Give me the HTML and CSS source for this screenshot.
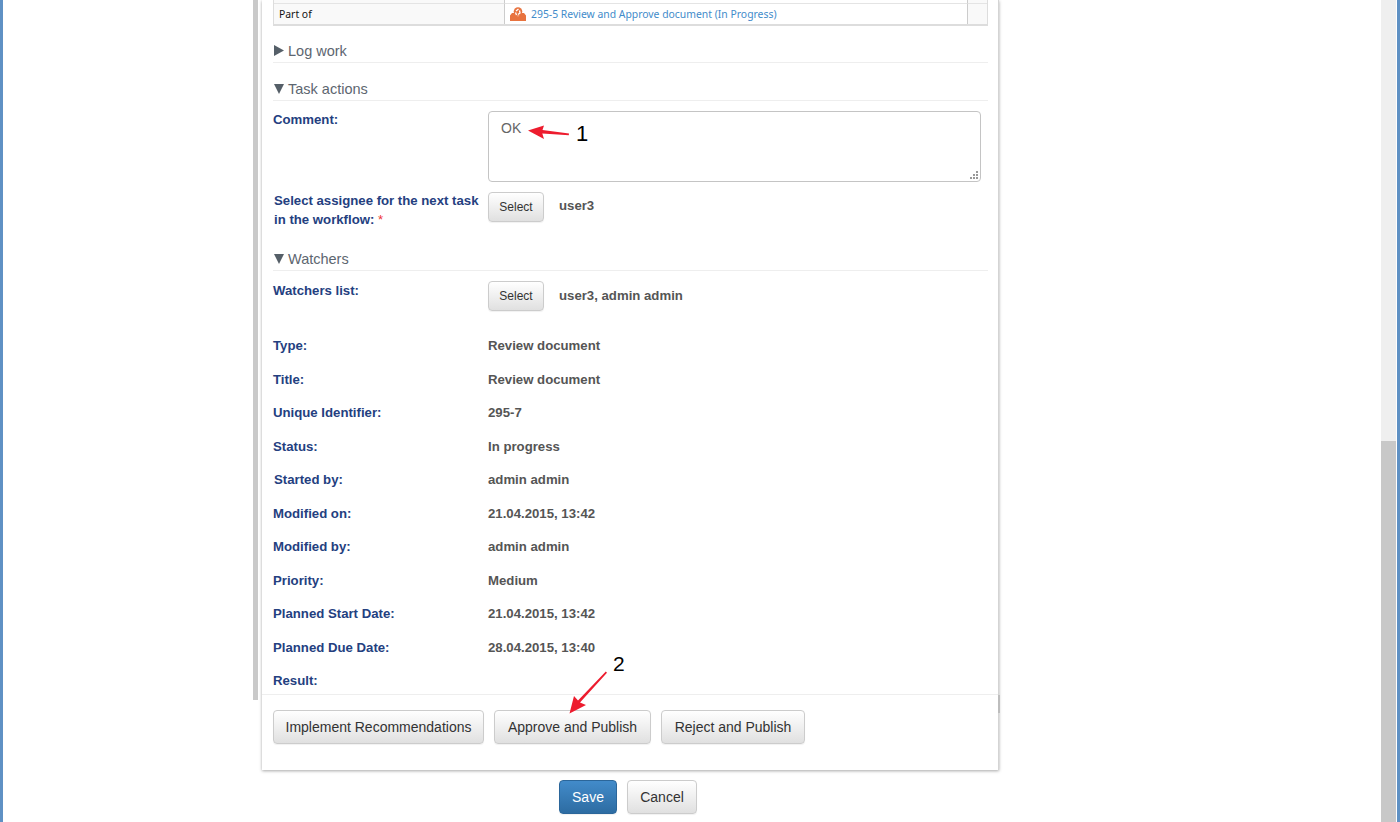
FILE: index.html
```html
<!DOCTYPE html>
<html lang="en">
<head>
<meta charset="utf-8">
<title>Review document</title>
<link rel="stylesheet" href="styles.css">
</head>
<body>
<div class="window">
  <div class="edge"></div>
  <div class="page">
    <div class="rail"></div>
    <div class="column">
      <div class="panel">
        <div class="panel-body">
          <div class="table">
            <div class="cell cell-stub"></div><div class="cell cell-mid cell-stub"></div><div class="cell cell-end cell-stub"></div>
            <div class="cell">Part of</div>
            <div class="cell cell-mid">
              <svg class="wf-icon" viewBox="0 0 16 14" aria-hidden="true"><path fill="#e8733f" d="M0 14V8.500L2 6h2.500L8 9.500 11.500 6H14l2 2.500V14z"/><circle cx="8" cy="4.500" r="4.300" fill="#e8733f"/><path fill="none" stroke="#fff" stroke-width="1.300" d="M6 4 8.500 2M9.500 3.500 10 6 8 7.500M5.500 5.500 6.500 8"/></svg>
              <a class="link" href="#">295-5 Review and Approve document (In Progress)</a>
            </div>
            <div class="cell cell-end"></div>
          </div>

          <h3 class="section section-log"><span class="tri tri-right"></span>Log work</h3>
          <h3 class="section section-actions"><span class="tri tri-down"></span>Task actions</h3>

          <div class="form-row row-comment">
            <label class="label">Comment:</label>
            <div class="textarea">OK<svg class="grip" viewBox="0 0 9 9" aria-hidden="true"><path fill="#999" d="M7 1h2v2H7zM4 4h2v2H4zM7 4h2v2H7zM1 7h2v2H1zM4 7h2v2H4zM7 7h2v2H7z"/></svg></div>
          </div>
          <div class="form-row row-assignee">
            <label class="label label-indent">Select assignee for the next task<br>in the workflow: <span class="req">*</span></label>
            <button class="btn btn-small">Select</button>
            <span class="value value-pick">user3</span>
          </div>

          <h3 class="section section-watchers"><span class="tri tri-down"></span>Watchers</h3>
          <div class="form-row row-watchers">
            <label class="label">Watchers list:</label>
            <button class="btn btn-small">Select</button>
            <span class="value value-pick value-low">user3, admin admin</span>
          </div>

          <dl class="details">
            <dt>Type:</dt><dd>Review document</dd>
            <dt>Title:</dt><dd>Review document</dd>
            <dt>Unique Identifier:</dt><dd>295-7</dd>
            <dt>Status:</dt><dd>In progress</dd>
            <dt class="label-indent">Started by:</dt><dd>admin admin</dd>
            <dt>Modified on:</dt><dd>21.04.2015, 13:42</dd>
            <dt>Modified by:</dt><dd>admin admin</dd>
            <dt>Priority:</dt><dd>Medium</dd>
            <dt>Planned Start Date:</dt><dd>21.04.2015, 13:42</dd>
            <dt>Planned Due Date:</dt><dd>28.04.2015, 13:40</dd>
            <dt>Result:</dt><dd></dd>
          </dl>
        </div>
        <div class="panel-footer">
          <button class="btn btn-implement">Implement Recommendations</button>
          <button class="btn btn-approve">Approve and Publish</button>
          <button class="btn btn-reject">Reject and Publish</button>
        </div>
      </div>
      <div class="actions">
        <button class="btn btn-primary">Save</button>
        <button class="btn btn-cancel">Cancel</button>
      </div>
    </div>
  </div>
  <div class="scrollbar"><div class="thumb"></div></div>
  <div class="edge edge-right"></div>
</div>

<svg class="annotation" viewBox="0 0 1400 822" aria-hidden="true">
  <path fill="#ed1c2e" d="M528 130.500 544 125.500 542.500 130 569 133.500 568.800 135.200 542.300 133.500 544 139z"/>
  <path fill="#ed1c2e" d="M569.500 713.500 574 696 578 700.500 605.800 671.500 607 672.700 580 702.500 586 705z"/>
</svg>
<span class="note note-1">1</span>
<span class="note note-2">2</span>
</body>
</html>
```
FILE: styles.css
```css
* { box-sizing: border-box; }
html, body { margin: 0; height: 100%; overflow: hidden; background: #fff; }
body { font-family: "Liberation Sans", Arial, sans-serif; color: #555; }

.window { display: flex; height: 822px; }
.edge { width: 3px; background: #5f91c4; flex: none; }
.edge-right { width: 3px; margin-left: 1px; }

.page { flex: 1; display: flex; min-width: 0; }
.rail { width: 5px; height: 700px; margin-left: 250px; background: #c9c9c9; flex: none; }
.column { width: 737px; margin-left: 4px; flex: none; }

.panel {
  position: relative;
  height: 770px;
  display: flex;
  flex-direction: column;
  background: #fff;
  border-right: 1px solid #d4d4d4;
  box-shadow: 0 1px 3px rgba(0,0,0,.35);
}
.panel-body { height: 694px; padding: 0 10px 0 11px; overflow: hidden; }
.panel-footer {
  position: relative;
  height: 76px;
  border-top: 1px solid #eee;
  padding: 15px 11px 0;
  display: flex;
  gap: 10px;
  align-items: flex-start;
}
.panel-footer::after {
  content: "";
  position: absolute;
  right: -2px;
  top: 0;
  width: 2px;
  height: 18px;
  background: #bdbdbd;
}

.table {
  display: grid;
  grid-template-columns: 230px 464px 1fr;
  grid-template-rows: 3px 21px;
  border: 1px solid #ddd;
  border-width: 0 1px 2px 1px;
  font-family: "Noto Sans", Tahoma, sans-serif;
  font-size: 10.4px;
  color: #111;
  background: #f9f9f9;
}
.cell { display: flex; align-items: center; padding-left: 5px; border-top: 1px solid #e4e4e4; }
.cell-stub { border-top: 0; }
.cell-mid { background: #fff; border-left: 1px solid #ccc; border-right: 1px solid #ccc; }
.cell-end { padding: 0; }
.wf-icon { width: 16px; height: 14px; margin-right: 5px; flex: none; }
.link { color: #428bca; text-decoration: none; }

.section {
  margin: 0;
  font-weight: normal;
  font-size: 14.500px;
  line-height: 20px;
  color: #5d6670;
  border-bottom: 1px solid #eee;
  height: 22px;
}
.section-log { margin-top: 15px; }
.section-actions { margin-top: 16px; }
.tri { display: inline-block; background: #555f68; margin: 0 4px 0 1px; }
.tri-right { width: 10px; height: 11px; clip-path: polygon(0 0, 100% 50%, 0 100%); }
.tri-down { width: 10px; height: 10px; clip-path: polygon(0 0, 100% 0, 50% 100%); }

.form-row { display: flex; align-items: flex-start; }
.label, .details dt {
  width: 215px;
  flex: none;
  font-weight: bold;
  font-size: 13.2px;
  line-height: 19px;
  color: #24407f;
}
.label-indent { padding-left: 1px; }
.req { color: #e33; font-weight: normal; }

.row-comment { margin-top: 10px; height: 81px; }
.row-comment .label { line-height: 17px; }
.textarea {
  position: relative;
  width: 493px;
  height: 71px;
  border: 1px solid #c4c4c4;
  border-radius: 4px;
  padding: 7px 12px;
  font-size: 14px;
  line-height: 18px;
  color: #666;
}
.grip { position: absolute; right: 2px; bottom: 2px; width: 9px; height: 9px; }

.row-assignee { height: 57px; }
.row-assignee .label { margin-top: -1px; }
.value { font-weight: bold; font-size: 13.2px; line-height: 19px; color: #555; }
.value-pick { margin-left: 15px; padding-top: 4px; }
.value-low { padding-top: 5px; }
.row-watchers { margin-top: 10px; height: 55px; }

.btn {
  height: 34px;
  padding: 0;
  font-family: "Liberation Sans", Arial, sans-serif;
  font-size: 14px;
  color: #333;
  border: 1px solid #ccc;
  border-radius: 4px;
  background: linear-gradient(#fff, #e0e0e0);
  box-shadow: 0 1px 1px rgba(0,0,0,.06);
}
.btn-small { height: 30px; width: 56px; font-size: 12px; }
.btn-implement { width: 211px; }
.btn-approve { width: 157px; }
.btn-reject { width: 144px; }
.btn-cancel { width: 70px; }
.btn-primary {
  width: 58px;
  color: #fff;
  border-color: #2b669a;
  background: linear-gradient(#428bca, #2d6ca2);
}

.details {
  margin: 0;
  display: grid;
  grid-template-columns: 215px 1fr;
  grid-auto-rows: 33.55px;
}
.details dt, .details dd { margin: 0; width: auto; }
.details dd { font-weight: bold; font-size: 13.2px; line-height: 19px; color: #555; }

.actions { display: flex; justify-content: center; gap: 10px; padding-top: 10px; padding-right: 5px; }

.scrollbar { width: 15px; background: #efefef; flex: none; display: flex; flex-direction: column; }
.thumb { margin-top: 441px; flex: 1; background: #c8c8c8; }

.annotation { position: absolute; left: 0; top: 0; width: 1400px; height: 822px; pointer-events: none; }
.note { position: absolute; line-height: 23px; color: #000; }
.note-1 { left: 576px; top: 122px; font-size: 22px; }
.note-2 { left: 613px; top: 652px; font-size: 21px; }
```
